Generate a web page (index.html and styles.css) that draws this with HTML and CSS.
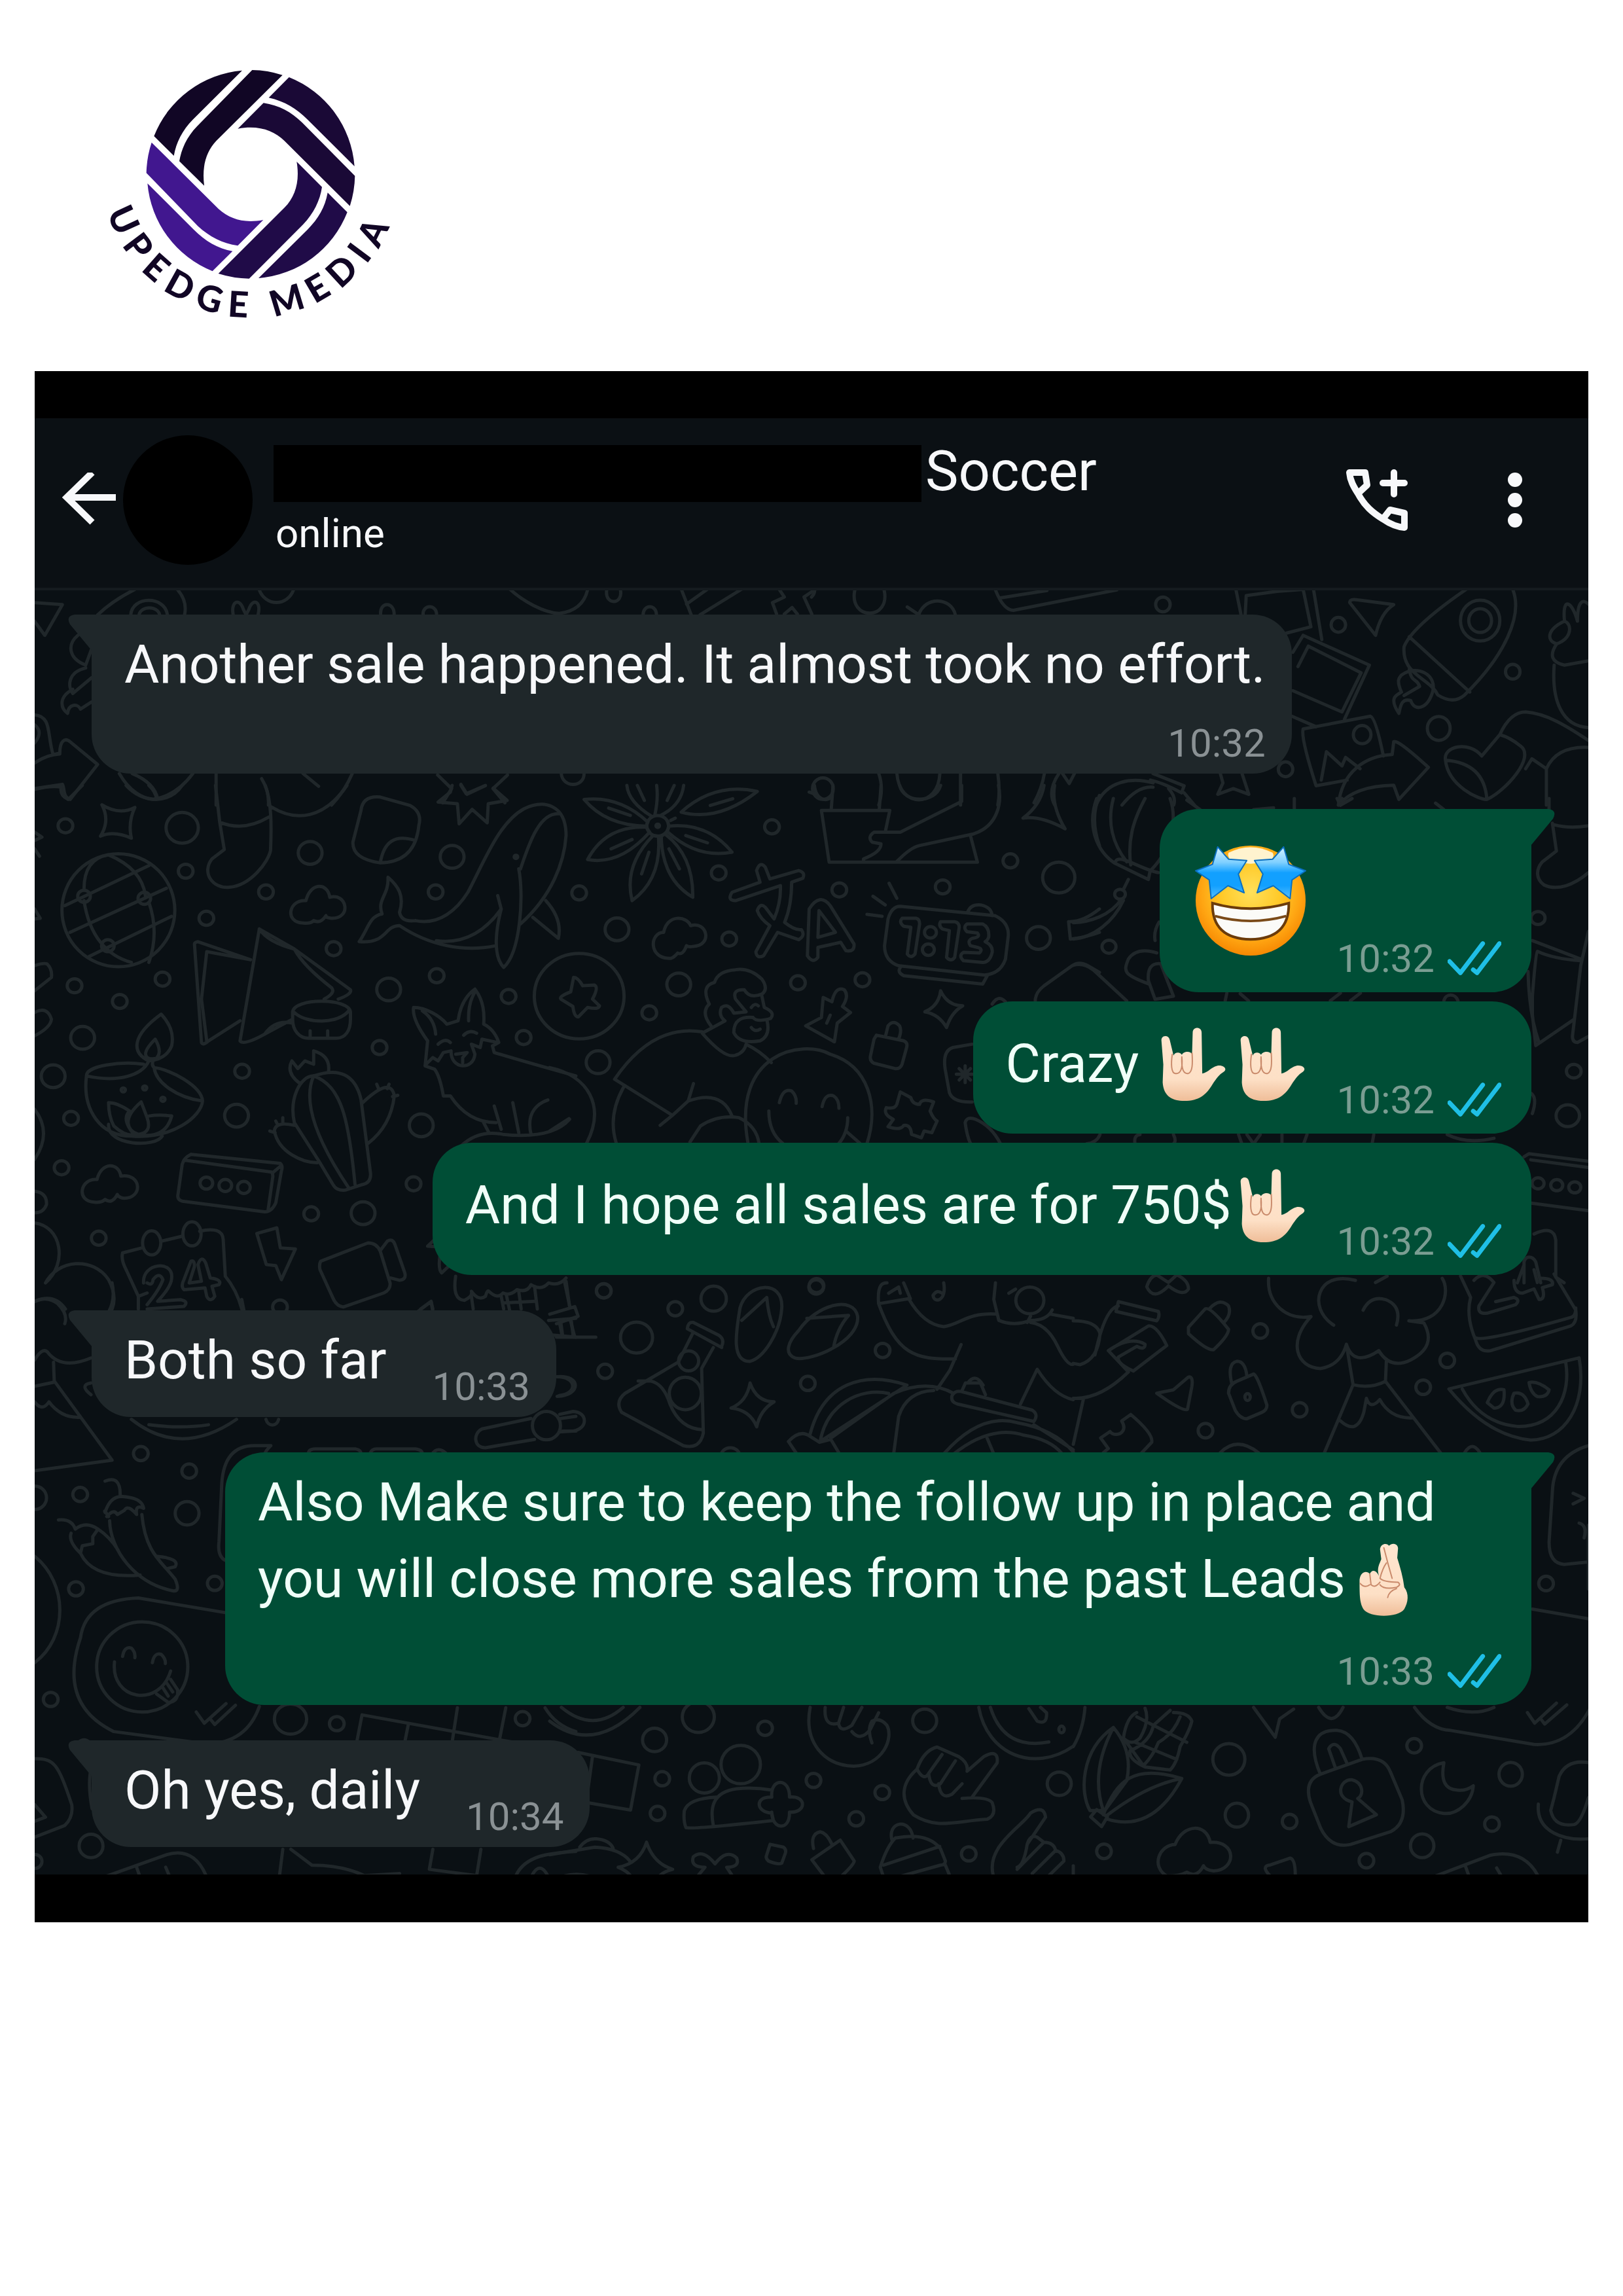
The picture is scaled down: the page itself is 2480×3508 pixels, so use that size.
FILE: index.html
```html
<!DOCTYPE html>
<html lang="en">
<head>
    <meta charset="UTF-8">
    <meta name="viewport" content="width=device-width, initial-scale=1.0">
    <title>Upedge Media</title>
    <link rel="stylesheet" href="styles.css">
</head>
<body>
    <!-- shared symbols -->
    <svg class="defs" aria-hidden="true">
        <defs>
            <linearGradient id="skin" x1="0" y1="0" x2="0" y2="1">
                <stop offset="0" stop-color="#ffe6cf"/>
                <stop offset="0.7" stop-color="#fde0c6"/>
                <stop offset="1" stop-color="#efbd98"/>
            </linearGradient>
            <radialGradient id="face" cx="0.5" cy="0.42" r="0.6">
                <stop offset="0" stop-color="#ffe05a"/>
                <stop offset="0.45" stop-color="#ffc928"/>
                <stop offset="0.75" stop-color="#ffa512"/>
                <stop offset="1" stop-color="#f58400"/>
            </radialGradient>
            <linearGradient id="star" x1="0" y1="0" x2="0" y2="1">
                <stop offset="0" stop-color="#d8f3ff"/>
                <stop offset="0.3" stop-color="#7fd0ff"/>
                <stop offset="0.5" stop-color="#12a0ff"/>
                <stop offset="0.75" stop-color="#12a0ff"/>
                <stop offset="1" stop-color="#58bfff"/>
            </linearGradient>
            <symbol id="ticks" viewBox="0 0 84 56">
                <path d="M3 32L20 50L55 4M40 45L46 50L81 4" fill="none" stroke="#1fbfe6" stroke-width="7" stroke-linejoin="round" stroke-linecap="round"/>
            </symbol>
            <symbol id="hand" viewBox="0 0 124 124">
                <path d="M14 24C14 16 25 15 27 23L33 48C35 42 44 42 46 47C48 41 60 40 62 46L63 12C63 2 77 2 77 12L78 76C88 74 92 66 101 64C110 62 118 68 112 73C104 78 100 84 94 93C84 110 72 119 50 119C26 119 17 107 16 90L17 62Z" fill="url(#skin)"/>
                <path d="M31 46C29 60 29 76 36 76C43 77 48 70 46 50M46 50C45 70 49 77 56 76C63 74 63 60 62 44" fill="none" stroke="#c98a6b" stroke-width="2" stroke-linecap="round"/>
            </symbol>
        </defs>
    </svg>

    <div class="page">
        <svg class="logo" viewBox="0 0 1500 1290" role="img" aria-label="Upedge Media">
            <path fill="#110625" d="M690 83A478 478 0 0 0 286 384L377 474C388 412 415 358 464 308Z"/>
            <path fill="#110625" d="M736 81A478 478 0 0 1 875 104L572 405C525 455 505 520 516 611L402 499C411 445 435 388 484 338Z"/>
            <path fill="#1a0936" d="M905 114A478 478 0 0 1 1205 522L990 308C940 259 885 224 812 208Z"/>
            <path fill="#1a0936" d="M788 232C860 243 915 273 965 322L1207 566A478 478 0 0 1 1184 704L884 406C835 356 760 332 670 350Z"/>
            <path fill="#200b48" d="M940 501L1056 617C1047 680 1017 738 970 788L722 1037A478 478 0 0 1 581 1014L884 712C935 660 955 590 940 501Z"/>
            <path fill="#200b48" d="M1082 643L1172 733A478 478 0 0 1 765 1035L990 812C1040 762 1070 710 1082 643Z"/>
            <path fill="#41178f" d="M275 413L582 718C635 765 700 785 787 768L670 886C600 875 540 845 488 797L251 553A478 478 0 0 1 275 413Z"/>
            <path fill="#41178f" d="M256 601L468 812C520 865 580 900 646 911L554 1003A478 478 0 0 1 256 601Z"/>
            <path id="arc" fill="none" d="M72 735A692 692 0 0 0 1400 700"/>
            <text class="logo-text"><textPath href="#arc">UPEDGE MEDIA</textPath></text>
        </svg>

        <main class="phone">
            <header class="topbar">
                <button class="icon-btn back" aria-label="Back">
                    <svg width="84" height="84" viewBox="0 4 84 84"><path d="M46 4L7 42L46 80M8 42H82" fill="none" stroke="#f7f8fa" stroke-width="10"/></svg>
                </button>
                <div class="avatar"></div>
                <div class="contact">
                    <div class="name-row">
                        <span class="redacted"></span>
                        <h1>Soccer</h1>
                    </div>
                    <p>online</p>
                </div>
                <button class="icon-btn call" aria-label="Add to call">
                    <svg width="94" height="94" viewBox="0 0 94 94" fill="none" stroke="#f7f8fa" stroke-width="10" stroke-linejoin="round">
                        <path d="M5 5H29L32 24L18 37C11 26 6 17 5 5ZM18 37C28 56 40 66 56 76M56 76L67 62L89 67V89C76 88 66 83 56 76Z"/>
                        <path d="M73 5V38M56 21H89" stroke-linecap="round"/>
                    </svg>
                </button>
                <button class="icon-btn more" aria-label="More options">
                    <svg width="24" height="86" viewBox="0 0 24 86" fill="#f7f8fa"><circle cx="12" cy="12" r="11"/><circle cx="12" cy="43" r="11"/><circle cx="12" cy="74" r="11"/></svg>
                </button>
            </header>

            <section class="chat">
                <svg class="doodles" viewBox="53 902 2374 1966" preserveAspectRatio="xMidYMin slice" aria-hidden="true">
                    <!-- top left edge -->
                    <g transform="translate(40 550) scale(.7908 .4337)">
                        <path d="M16 855L70 862L36 970L16 920M138 898Q165 850 210 808M292 808Q312 850 306 898M202 898C205 830 268 830 273 898M218 898C222 865 254 865 258 898M450 808C462 870 505 870 517 808M400 898C395 850 412 835 420 880L425 898L430 880C438 835 455 850 448 898M685 898C682 850 712 850 711 898M767 898C765 860 794 860 793 898M935 808C960 850 1000 890 1030 893C1065 885 1080 850 1085 808M1122 808C1116 865 1155 865 1148 808M1192 898C1192 860 1218 860 1218 898M1266 808L1285 898M1276 860L1316 808M1302 898L1382 808M1455 808L1465 835L1442 855L1450 895M1525 808L1503 835L1518 895M1465 895L1480 872L1490 895"/>
                        <path d="M100 970C80 1000 80 1050 115 1075L126 1020M115 1085C80 1100 80 1150 90 1175L126 1120M90 1160C60 1190 68 1230 80 1245C82 1210 100 1210 105 1230L126 1205M16 1250C50 1255 40 1320 52 1390L65 1385C65 1340 75 1330 85 1345L138 1425L85 1548C70 1540 75 1510 70 1495L16 1510M16 1420Q40 1390 65 1388M16 1285Q34 1310 16 1350M180 1457C200 1520 225 1545 245 1548C275 1540 300 1510 322 1457M205 1457C235 1480 250 1510 254 1546M367 1457V1568M455 1475Q470 1520 468 1568M535 1457L565 1502M630 1457Q615 1520 590 1568M795 1462L822 1510L805 1560M930 1462L902 1510L925 1560M840 1495L852 1530L887 1500M1034 1457C1036 1508 1078 1508 1078 1457"/>
                    </g>
                    <!-- top right: photos, rocket, mitten -->
                    <g transform="translate(1240 550) scale(.7908 .4337)">
                        <path d="M0 835Q8 820 5 808M84 808C70 920 155 920 140 808M185 870L208 898M207 898C220 830 270 835 278 898M355 808Q370 880 390 882L590 810M365 838L455 812M820 808L830 898M838 898L840 830L900 815L950 808L965 940L918 962M970 808L986 985M930 1030L950 970L1078 1075L1030 1265M940 1080L960 1008L1062 1102L1025 1240L930 1165M928 1255L975 1292M950 1300L1080 1255Q1090 1260 1105 1395M950 1300Q945 1330 975 1500L1035 1480M985 1480L995 1380L1025 1430L1032 1400L1060 1440M1018 1568C1025 1450 1070 1395 1122 1390L1125 1345Q1132 1335 1192 1435L1135 1548L1125 1498Q1050 1500 1018 1568M1040 855Q1040 840 1055 845L1125 862Q1100 890 1090 970Z"/>
                        <path d="M1265 808Q1160 940 1145 1010C1140 1110 1195 1120 1210 1180Q1240 1215 1262 1180C1340 1040 1375 900 1355 808M1155 975L1272 1170M1140 1110C1170 1070 1210 1110 1200 1170C1190 1230 1165 1240 1158 1200C1140 1190 1138 1220 1135 1245C1115 1190 1130 1180 1140 1170C1130 1130 1135 1120 1140 1110M1155 1090C1160 1140 1170 1120 1175 1150L1145 1182M1501 860C1490 840 1480 850 1480 920C1470 850 1450 830 1455 920C1420 950 1420 990 1440 1000C1470 980 1470 930 1455 920M1440 1000C1425 1040 1430 1065 1455 1075L1501 1060M1435 1075C1430 1200 1450 1290 1501 1295M1330 1320Q1350 1240 1380 1240C1420 1245 1460 1290 1501 1340M1330 1320L1295 1395C1270 1340 1220 1360 1225 1410C1230 1500 1290 1550 1305 1548C1340 1520 1400 1400 1370 1360Q1350 1330 1330 1320M1225 1410Q1300 1420 1305 1548M1380 1440L1392 1405L1420 1440V1568M1420 1440Q1440 1360 1501 1365"/>
                        <ellipse cx="1292" cy="918" rx="38" ry="72"/><ellipse cx="1292" cy="918" rx="22" ry="42"/>
                        <ellipse cx="679" cy="861" rx="14" ry="26"/><ellipse cx="1018" cy="933" rx="14" ry="26"/><ellipse cx="1355" cy="1098" rx="14" ry="26"/><ellipse cx="1212" cy="1298" rx="22" ry="42"/><ellipse cx="916" cy="1442" rx="14" ry="26"/><ellipse cx="1064" cy="1320" rx="17" ry="32"/>
                        <path d="M130 1457Q140 1510 130 1568M165 1457C170 1580 245 1580 248 1457M288 1457V1568M360 1457Q365 1520 360 1568M450 1457Q445 1510 430 1560M478 1457Q455 1520 470 1568M485 1457L498 1492L508 1457M550 1568C570 1480 620 1470 660 1490M660 1457L720 1500L715 1525Q680 1490 655 1480M790 1457L795 1490L785 1530L815 1510L845 1530L832 1457M600 1568Q630 1500 660 1505M690 1510Q705 1540 700 1568M720 1525L740 1568"/>
                        <ellipse cx="22" cy="1510" rx="20" ry="38"/>
                    </g>
                    <!-- right of the sent messages -->
                    <g transform="translate(1640 1220) scale(.5102 .4719)">
                        <path d="M70 0C40 90 70 170 125 210L225 262L230 235C300 160 310 60 290 0M120 0C100 80 120 150 160 205M215 0C190 50 160 120 172 215M125 210C130 170 200 230 255 240M165 262L150 295M145 325C110 380 50 400 0 402M150 330C120 400 60 450 0 455M795 15L805 0M540 36L600 30M662 0V36M790 0L800 22L835 0M1085 15L1110 36M340 5L380 36M245 650L225 590Q220 530 262 535M245 650L300 640L262 535M0 540Q30 530 60 555L160 655M225 600C150 570 150 560 165 520Q190 480 250 500M245 460Q240 430 257 400"/>
                        <path d="M1425 0V36M1435 80L1447 170L1405 205C1385 230 1385 260 1410 280C1450 300 1500 280 1543 240M1440 85Q1490 100 1560 85M1375 460L1520 520M1543 430L1520 540L1495 770Q1495 790 1510 790L1560 760M1520 525Q1440 520 1390 495Q1385 500 1375 640L1375 700L1385 800L1500 715M1362 560Q1365 700 1395 790M1372 955Q1390 970 1375 1020M1350 1160L1365 1150L1560 1177M1370 1170L1560 1197M1372 1310L1560 1337M1380 1410Q1440 1380 1445 1430V1550L1470 1568M1350 1568V1500C1355 1480 1375 1480 1385 1500L1400 1568M1330 1568L1350 1510"/>
                        <circle cx="107" cy="480" r="21"/><circle cx="140" cy="310" r="16"/><circle cx="1392" cy="387" r="21"/><circle cx="1499" cy="883" r="22"/><circle cx="1481" cy="1027" r="35"/><circle cx="1392" cy="1246" r="18"/><circle cx="1448" cy="1252" r="18"/><circle cx="1502" cy="1259" r="18"/>
                        <path d="M460 630L455 655M770 655L800 630M830 655L860 630M500 632L525 655M1110 655C1115 630 1145 630 1152 655M80 1088Q70 1115 40 1118M185 1118Q180 1090 200 1088M300 1088Q310 1110 300 1118M495 1088L505 1118M560 1088L540 1118L520 1088M625 1088V1118M700 1088L690 1118M900 1088L895 1118M1120 1088Q1180 1120 1260 1100"/>
                    </g>
                    <!-- left: globe, paper, lamp, cactus, fox, whale, calendar -->
                    <g transform="translate(40 1200) scale(.5357 .5102)">
                        <path d="M24 12Q70 0 100 5Q95 30 120 42L160 0M285 0Q320 40 370 42Q420 40 445 0M350 0Q370 20 372 42M216 58Q265 90 310 66Q290 110 300 158Q250 135 212 152Q240 105 216 58ZM540 0L552 110L565 192L530 220C500 260 530 310 580 305C640 300 690 230 697 195C700 120 700 50 682 0M552 110Q620 140 692 95M700 65C770 110 850 100 915 0M24 140L45 155L24 165M24 190L38 212M24 370L40 398L24 400"/>
                        <path d="M955 75Q960 30 1010 35L1095 60Q1130 80 1120 120Q1110 230 1010 232Q930 220 932 170ZM1010 232C1020 170 1050 145 1110 165M1215 0L1210 20L1175 50L1230 55L1235 115L1272 72L1315 112L1318 55L1372 45L1332 8M1240 0L1255 25L1310 0M1110 405C1180 420 1230 370 1260 320C1310 220 1350 110 1420 70C1480 40 1540 60 1540 150C1535 230 1500 330 1410 415M1410 250C1430 190 1460 80 1520 85M1405 250C1420 330 1410 500 1362 545C1330 510 1340 430 1355 370L1345 330M1110 405Q1070 410 1065 380C1080 330 1060 300 1032 275C1035 330 1000 340 1015 385C980 390 975 430 950 468C1030 475 1020 420 1065 420C1150 480 1250 500 1340 480M1170 465Q1280 480 1355 370M1482 345Q1530 400 1518 458L1445 395"/>
                        <circle cx="1397" cy="214" r="5"/>
                        <ellipse cx="263" cy="374" rx="161" ry="169"/><path d="M110 360L350 240M125 440L400 308M180 512L415 392M165 310Q165 220 235 208Q330 250 340 330M165 345C180 450 230 510 300 530M350 350Q380 440 350 530"/><circle cx="165" cy="332" r="18"/><circle cx="337" cy="338" r="18"/><circle cx="233" cy="480" r="18"/>
                        <path d="M790 412C735 410 750 340 798 345C810 290 860 290 866 335C915 320 930 400 870 398Q850 395 855 390Q840 415 820 405Q810 415 790 412ZM665 430L610 765Q620 780 680 745L760 700M665 430L765 490L925 612Q930 625 890 640M665 430Q690 470 765 490Q790 540 870 605Q885 620 850 640M480 475L500 770Q505 780 520 765L610 705M640 522L490 468Q480 470 480 475M640 522L515 498L500 640L515 765M680 745Q710 700 760 712M760 680C760 635 925 635 925 680V700C925 735 910 757 885 757H805C780 757 760 735 760 700ZM765 680C800 715 890 715 920 675M810 735V755M860 735V755"/>
                        <path d="M385 685C300 750 300 800 350 825Q400 820 415 780Q425 730 385 685ZM368 760C320 810 345 822 370 818Q390 800 368 760ZM335 835C270 825 170 840 172 870C160 970 210 1050 300 1050C420 1060 500 990 503 945C500 900 410 850 365 845Q355 835 365 820M172 870C260 890 330 870 350 825M365 845C370 890 430 935 503 945M235 950Q235 990 250 1020Q280 1050 310 1048Q270 1000 295 975Q260 950 235 950ZM328 948C270 1000 290 1035 320 1045Q360 1040 345 995ZM350 990Q380 985 415 990Q400 1050 340 1048M235 1015C230 1080 370 1085 388 1050"/>
                        <circle cx="277" cy="912" r="6"/><circle cx="338" cy="906" r="6"/><circle cx="390" cy="940" r="6"/>
                        <path d="M780 892Q740 860 758 825L775 848L795 825L820 835V795Q870 810 862 860M765 1010C750 940 780 870 820 870Q930 830 955 940L982 1160Q985 1190 960 1195L910 1212Q885 1215 875 1195L835 1125ZM820 870C790 940 820 1050 920 1205M820 870C900 900 920 1000 938 1195M765 1018Q710 1005 708 1035C720 1100 790 1130 830 1130M960 950Q1040 870 1050 930Q1040 1020 975 1072M695 1035L710 1040M712 1005L718 1018M732 995V1008M1000 895L1005 908M1035 895L1030 908M1060 928L1045 932M470 1105L725 1132Q733 1140 728 1155L712 1250Q700 1278 680 1277L445 1245Q430 1240 433 1225L445 1135Q450 1115 470 1105M450 1122L700 1158Q705 1165 703 1175L690 1272M705 1158L728 1138"/>
                        <circle cx="514" cy="1191" r="18"/><circle cx="568" cy="1198" r="18"/><circle cx="621" cy="1204" r="18"/>
                        <path d="M195 1248C140 1245 155 1175 202 1180C215 1125 265 1130 270 1170C330 1160 335 1240 275 1236Q262 1232 260 1225Q245 1255 225 1240Q215 1250 195 1248ZM1145 765Q1100 700 1105 665C1140 665 1180 690 1200 715L1232 705Q1240 640 1280 610Q1310 650 1305 715Q1335 730 1348 770L1330 780L1335 800Q1430 830 1568 870M1145 765L1138 840L1165 850Q1180 870 1190 930L1210 930Q1260 1010 1340 1010M1130 675Q1165 700 1168 745M1262 705Q1260 650 1282 615M1175 775Q1195 755 1210 770M1248 748Q1265 730 1285 742M1138 838L1160 815L1175 825L1190 800L1212 795C1210 850 1275 855 1280 805L1270 775L1295 785L1300 760L1345 770M1225 805L1258 800L1245 815V830M1335 960L1355 1030M1388 950L1405 1040M1488 942C1440 960 1430 1000 1440 1045M1240 1080Q1290 1030 1360 1045Q1500 1060 1550 1000M1305 1010L1320 1040"/>
                        <path d="M60 535Q75 550 72 575L24 615M24 540Q50 530 60 535M24 680Q60 660 72 700Q70 725 24 750M24 970Q75 1040 24 1120M24 1215Q60 1220 58 1255Q50 1280 24 1280M24 1310C100 1320 120 1430 55 1490C90 1420 190 1410 235 1480Q260 1530 245 1568M24 1545Q80 1520 112 1568M275 1400L330 1385M385 1365L445 1350M495 1335Q560 1320 562 1360L568 1470Q600 1510 615 1568M275 1400Q270 1420 285 1450L320 1530V1568M320 1530L345 1520M658 1342L715 1325L725 1385L768 1388L728 1480L712 1438L685 1435ZM840 1425L975 1370Q1000 1370 1010 1395L1038 1490Q1040 1510 1020 1520L905 1562Q885 1560 875 1535L838 1450Q835 1435 840 1425ZM1012 1390L1030 1365Q1045 1355 1052 1375L1080 1460Q1085 1480 1065 1482L1040 1475"/>
                        <path d="M335 1490C330 1430 420 1420 415 1475Q415 1500 375 1545L440 1540Q465 1545 450 1560L345 1568M345 1490Q360 1500 362 1480Q380 1455 390 1480Q380 1510 345 1555M470 1425Q480 1420 480 1440L465 1490L500 1485L490 1435Q500 1405 512 1430L525 1475Q560 1480 550 1495L530 1500L538 1530Q525 1550 515 1530L510 1505L450 1510Q440 1500 450 1480Z"/>
                        <ellipse cx="358" cy="1370" rx="26" ry="36"/><ellipse cx="473" cy="1343" rx="26" ry="36"/>
                        <g>
                            <circle cx="112" cy="121" r="21"/><circle cx="455" cy="257" r="21"/><circle cx="684" cy="319" r="21"/><circle cx="514" cy="398" r="21"/><circle cx="877" cy="489" r="21"/><circle cx="389" cy="580" r="21"/><circle cx="138" cy="600" r="21"/><circle cx="267" cy="647" r="21"/><circle cx="616" cy="856" r="21"/><circle cx="1008" cy="785" r="21"/><circle cx="1168" cy="319" r="21"/><circle cx="1171" cy="570" r="21"/><circle cx="1376" cy="632" r="21"/><circle cx="1419" cy="755" r="21"/><circle cx="128" cy="997" r="21"/><circle cx="101" cy="1145" r="21"/><circle cx="207" cy="1356" r="21"/><circle cx="813" cy="1283" r="21"/><circle cx="1105" cy="1193" r="21"/>
                            <circle cx="810" cy="202" r="34"/><circle cx="1215" cy="214" r="34"/><circle cx="1034" cy="611" r="34"/><circle cx="161" cy="756" r="34"/><circle cx="77" cy="871" r="34"/><circle cx="600" cy="989" r="34"/><circle cx="1127" cy="1018" r="34"/><circle cx="961" cy="1281" r="34"/><circle cx="445" cy="127" r="46"/>
                        </g>
                        <path d="M1145 1380L1175 1350V1382ZM1180 1410Q1175 1450 1185 1460L1205 1440M1225 1470Q1215 1540 1250 1542Q1275 1530 1270 1515Q1290 1545 1310 1530Q1315 1510 1320 1515Q1345 1540 1360 1520Q1380 1530 1400 1510Q1430 1520 1440 1495Q1470 1515 1490 1490Q1520 1500 1540 1475M1270 1530L1275 1568M1355 1530L1362 1568M1405 1515L1412 1568M1450 1500L1458 1568M1540 1485L1550 1560M1360 1550L1450 1545M1125 1568L1155 1545L1160 1568"/>
                    </g>
                    <!-- middle: flower, clock, runner, smiley -->
                    <g transform="translate(840 1200) scale(.5357 .5102)">
                        <path d="M290 92Q225 50 220 0M300 88Q310 40 305 0M316 90Q375 60 382 0M250 0L270 45M355 0L335 45M280 110Q200 30 98 42Q160 120 275 122ZM275 125Q160 120 108 222Q200 240 285 140ZM295 150Q210 240 235 345Q320 280 310 152ZM318 152Q320 280 408 335Q410 210 328 145ZM335 138Q420 220 520 200Q450 110 340 122ZM375 80Q480 110 592 18Q470 -10 375 80ZM168 68L230 90M175 190L235 162M262 265L283 200M340 190L370 250M388 150L450 172M458 60L522 40M345 105L358 98"/>
                        <circle cx="308" cy="121" r="31"/><circle cx="308" cy="121" r="5"/>
                        <path d="M740 20L755 25M755 0C760 50 800 50 803 30M808 0L803 72M945 0L940 72M775 75H970L958 135M775 75L797 230H1220L1200 150M1175 0V48L1000 140H925Q905 155 920 170L945 175Q945 200 895 220V230M990 228Q1030 185 1055 180L1210 145C1280 120 1290 50 1280 0M998 0C1010 55 1100 55 1115 0M1410 0Q1400 60 1350 98Q1400 90 1470 130Q1430 60 1440 0M1568 30Q1540 100 1568 180M1568 370Q1520 410 1480 408L1485 460Q1530 455 1568 440"/>
                        <path d="M520 320L600 290L590 255Q600 225 615 245L628 280L710 255Q730 260 722 278L690 290Q690 360 670 410Q700 435 718 432Q730 450 710 462L650 440L610 510Q590 520 588 498L628 420Q600 400 592 375Q600 350 615 365L640 400Q660 350 658 300L530 345Q505 345 520 320ZM735 510L740 370Q770 320 800 360L868 475Q870 500 845 495L830 470L765 485V515Q750 535 735 510ZM768 375L765 455L815 440ZM905 386L948 392M922 332L957 358M968 293L990 338"/>
                        <path d="M1000 362L1270 390Q1310 410 1308 450L1300 520Q1285 565 1240 568L995 540Q955 525 955 480L965 400Q975 362 1000 362ZM1192 380Q1200 355 1230 358Q1260 365 1262 390M1000 545Q990 560 1010 570L1235 595L1248 570M1005 398H1045Q1055 400 1055 415L1042 505Q1030 520 1020 505L1030 425L1010 422Q995 410 1005 398ZM1115 408H1155Q1168 410 1168 425L1155 515Q1145 530 1132 515L1140 435L1120 430Q1108 420 1115 408ZM1190 415H1235Q1255 425 1252 455Q1248 465 1242 468Q1265 480 1262 500Q1255 530 1235 530L1180 525Q1165 510 1180 500L1225 502Q1238 490 1220 485L1200 480Q1190 465 1205 458Q1230 455 1220 442L1190 438Q1178 425 1190 415Z"/>
                        <circle cx="1086" cy="440" r="17"/><circle cx="1080" cy="492" r="17"/>
                        <path d="M345 518C280 520 285 440 325 440C335 385 390 390 402 420C450 405 465 480 410 482Q395 485 390 480Q380 510 365 502Q355 515 345 518ZM68 575Q80 575 94 600L128 598Q140 605 122 640L142 660Q140 672 108 665L82 693Q70 695 66 662L32 640Q25 632 60 618Z"/>
                        <circle cx="84" cy="631" r="128"/>
                        <path d="M460 720Q430 680 455 655Q430 600 470 590Q480 555 530 552Q570 545 605 580Q625 610 605 625Q570 640 555 612Q520 610 530 640L560 678L525 682Q510 650 490 665Q480 690 500 705L435 742Q500 820 530 808Q555 800 560 775M605 630L612 665Q645 680 630 698Q590 710 580 695Q525 690 525 740Q540 775 600 765Q630 750 620 705M575 725Q585 740 600 730M575 665Q585 650 595 660M435 738C330 720 250 780 185 880L350 988L395 945L410 893M350 988L315 1018M210 905Q165 990 190 1072M395 945Q490 910 520 990M400 1068L430 1020Q480 985 540 995Q590 1020 597 1072M560 775Q600 795 632 830M0 845C110 870 160 960 105 1072M0 1035L55 998"/>
                        <path d="M565 1068C520 800 720 760 800 805C910 840 940 960 905 1072M655 950Q665 905 690 915Q705 930 703 952M777 962Q785 920 810 930Q825 940 825 967M625 975Q625 1040 665 1072M850 995Q850 1040 825 1072M845 1035L885 1072"/>
                        <path d="M780 635L805 648Q815 600 840 612Q855 630 835 662L858 680L820 712L812 768L730 720L775 695ZM800 688L790 712M932 748L1010 765Q1022 770 1018 785L1005 835Q1000 850 985 848L925 832Q912 825 915 810L925 760ZM958 750L965 720Q980 700 998 720Q1005 735 995 760M1115 615Q1135 660 1178 660Q1145 680 1132 725Q1110 685 1070 678Q1110 660 1115 615ZM1000 918L1030 935Q1035 955 1055 955Q1060 935 1095 948L1085 975Q1095 1000 1105 1005L1090 1040L1068 1035L1060 1055L1032 1045Q1030 1015 1010 1018Q1000 1035 965 1022L980 1000Q950 985 960 965Q985 970 990 955ZM1205 775L1150 785Q1120 795 1128 850L1140 920Q1150 950 1205 948M1185 840V890M1160 865H1205M1168 848L1200 882M1200 848L1168 882M1185 1010Q1190 990 1215 1000Q1260 1020 1285 1072M1185 1010Q1190 1050 1200 1072M1385 645Q1385 620 1410 600L1490 540Q1510 525 1535 540L1568 560M1262 655Q1280 625 1300 648"/>
                        <g>
                            <circle cx="84" cy="322" r="21"/><circle cx="482" cy="262" r="21"/><circle cx="634" cy="124" r="21"/><circle cx="826" cy="313" r="21"/><circle cx="512" cy="460" r="21"/><circle cx="284" cy="681" r="21"/><circle cx="708" cy="591" r="21"/><circle cx="892" cy="582" r="21"/><circle cx="1121" cy="304" r="21"/><circle cx="1314" cy="226" r="21"/><circle cx="154" cy="1514" r="21"/><circle cx="761" cy="1498" r="21"/>
                            <circle cx="192" cy="431" r="34"/><circle cx="368" cy="596" r="34"/><circle cx="138" cy="829" r="34"/><circle cx="1394" cy="457" r="34"/><circle cx="1452" cy="276" r="46"/>
                        </g>
                    </g>
                    <!-- left, below: peppers, sticker -->
                    <g transform="translate(40 1960) scale(.5357 .6378)">
                        <path d="M245 0Q255 40 235 70M615 40L622 70M24 45Q60 30 90 50Q120 75 110 98M24 185Q45 155 60 165Q100 210 185 180M78 190L80 235L245 425L24 450M24 248L80 238M24 285Q45 310 65 285Q100 325 155 322M185 240Q150 245 185 268M1115 70L1155 45L1160 70M1370 30L1380 70M1490 90L1568 85M1500 125L1568 130M1525 95L1530 125M1555 92L1560 125M1515 225C1570 225 1575 265 1520 270M1440 325L1300 350C1275 360 1275 395 1310 395L1450 375M1525 325L1568 320M1530 355L1568 355M300 327Q440 420 600 327M350 340Q440 350 520 340M684 327C690 345 715 345 720 327"/>
                        <ellipse cx="1484" cy="342" rx="40" ry="34"/>
                        <path d="M225 475Q270 460 268 510M235 560Q220 540 225 550Q240 510 275 512Q330 515 335 540Q310 530 315 555Q290 530 280 545L260 555Q250 540 230 560M238 570C240 640 310 720 420 738Q440 740 425 710C390 670 340 650 330 555M92 568Q130 565 140 590M140 590Q170 570 205 590L190 608L190 625L160 630L155 648Q120 620 128 600M155 648Q190 710 325 700M205 590Q240 610 262 640M370 655Q440 660 425 680L400 685M568 665Q545 655 550 620L558 480Q565 390 650 390H698Q685 400 680 410M805 410Q805 398 825 398H940Q955 400 955 410M980 410Q985 398 1000 398H1110Q1130 400 1130 410M1158 410Q1175 390 1200 410M24 655C120 720 120 850 24 910"/>
                        <path d="M568 790L320 755Q170 760 155 850Q90 1010 250 1075L520 1105Q630 1100 665 1015M275 895Q280 870 300 875Q312 885 310 898M360 910Q365 885 385 890Q398 900 397 912M252 908C240 1000 380 1020 412 930M372 985L405 1005Q435 1005 432 975L412 950M390 970L405 990M402 960L418 980M485 1028L508 1055L570 1008M528 1048L538 1058L597 1012M958 1035L1385 1100M958 1035L943 1100M1090 1058L1080 1100M1230 1018L1215 1100M1368 1018L1350 1095M1480 1018Q1510 1060 1568 1075M24 1140C80 1140 90 1150 130 1250Q135 1280 110 1300L24 1328M24 1250L55 1280L24 1290M150 1100Q165 1090 180 1100M185 1165Q175 1200 188 1260M220 1424L400 1370Q480 1350 515 1424M315 1400L325 1424M398 1400L410 1424M732 1357L722 1424M755 1357L815 1395Q900 1395 965 1420L1065 1415M1160 1357L1150 1405L1285 1420L1297 1357M1395 1424C1420 1370 1500 1365 1568 1362M1440 1424Q1465 1380 1490 1424"/>
                        <ellipse cx="331" cy="920" rx="130" ry="108"/>
                        <g>
                            <ellipse cx="724" cy="58" rx="21" ry="17"/><ellipse cx="327" cy="409" rx="21" ry="17"/><ellipse cx="465" cy="451" rx="21" ry="17"/><ellipse cx="154" cy="507" rx="21" ry="17"/><ellipse cx="142" cy="733" rx="21" ry="17"/><ellipse cx="538" cy="720" rx="21" ry="17"/><ellipse cx="70" cy="998" rx="21" ry="17"/><ellipse cx="886" cy="1056" rx="21" ry="17"/><ellipse cx="1416" cy="1044" rx="21" ry="17"/><ellipse cx="24" cy="1386" rx="21" ry="17"/><ellipse cx="459" cy="552" rx="34" ry="28"/><ellipse cx="24" cy="515" rx="34" ry="28"/><ellipse cx="185" cy="1349" rx="34" ry="28"/><ellipse cx="754" cy="1045" rx="46" ry="36"/>
                        </g>
                    </g>
                    <!-- middle, below: flask, flip-flops, backpack, people, hands -->
                    <g transform="translate(840 1960) scale(.5102 .6378)">
                        <path d="M0 75L75 57L85 80L20 98M45 0L60 57M30 98L38 130M62 90L75 130M20 130H138M22 225C95 220 95 270 22 272M30 315L70 308C115 310 115 350 70 355L30 357M425 95Q415 95 412 110L515 155M430 95L505 125Q525 135 515 152M430 118L385 190L225 265Q195 285 215 310L400 390Q450 400 460 360L455 205L490 155M265 235H300Q340 240 360 290Q390 350 460 352"/>
                        <ellipse cx="416" cy="187" rx="30" ry="24"/><ellipse cx="406" cy="265" rx="48" ry="39"/>
                        <path d="M600 240Q620 285 672 285Q630 305 620 345Q600 305 543 300Q590 285 600 240ZM570 60C590 0 700 -10 695 60C690 120 640 180 600 188C540 190 560 110 570 60ZM575 90L650 35Q655 80 670 105M745 115C800 50 910 30 922 80C930 140 780 190 735 180C700 170 715 140 745 115ZM770 85L895 78Q860 110 850 155"/>
                        <path d="M985 50C980 0 1000 0 1010 0M985 50L1075 38Q1120 100 1180 105C1230 100 1250 70 1340 75M1060 0L1080 38M1015 25L1045 10L1050 25M985 50C1040 170 1090 185 1215 182M1232 148L1198 210L1160 255M1180 0C1190 45 1150 50 1148 30Q1160 15 1175 25M1335 0L1330 40L1345 90Q1390 105 1440 90Q1490 90 1505 65M1375 25L1395 15M1440 80L1430 95M1500 75L1568 85M1440 95Q1490 100 1520 150T1568 195M1410 290L1460 207Q1510 270 1568 280M715 380Q750 350 780 368L808 382L842 375L868 410M715 380L740 410M780 362C820 240 940 210 1070 245L810 380C830 290 930 250 1015 265M842 372L1030 265Q1130 230 1210 265M1030 410L1045 320Q1070 260 1150 258M1205 270Q1215 255 1240 262L1445 305Q1465 315 1450 332L1220 290Q1200 285 1205 270ZM1235 258L1245 240H1290L1305 268M1252 240Q1275 215 1298 245M1180 410Q1290 310 1400 335Q1510 350 1568 405M1210 410Q1320 340 1420 365Q1500 375 1535 410M1310 372L1330 410M1450 340L1568 400"/>
                        <ellipse cx="1438" cy="42" rx="42" ry="32"/>
                        <path d="M0 1050Q130 1130 270 1017M35 1017Q130 1080 220 1017M85 1125L267 1155L242 1263L110 1245M128 1135L110 1240M408 1305Q400 1290 403 1265Q415 1235 500 1232M408 1305Q420 1310 670 1288M490 1300C480 1260 485 1220 560 1212Q610 1208 665 1215M670 1288L665 1270C620 1270 610 1230 665 1232C660 1185 720 1185 718 1232C770 1228 770 1270 718 1268C720 1315 665 1310 665 1268"/>
                        <ellipse cx="463" cy="1186" rx="45" ry="36"/><ellipse cx="572" cy="1154" rx="59" ry="46"/>
                        <path d="M780 1017C760 1100 820 1155 910 1158C1000 1155 1030 1090 1010 1060Q990 1040 965 1050Q950 1070 965 1102M825 1017Q820 1065 865 1055L880 1017M865 1055Q870 1080 905 1060L935 1017M905 1075Q930 1100 960 1070L985 1030M1100 1165C1050 1200 1050 1240 1090 1275C1160 1310 1210 1290 1310 1285Q1340 1275 1325 1245Q1310 1230 1235 1235M1100 1165Q1120 1120 1160 1112L1225 1135M1100 1165Q1120 1195 1135 1175L1175 1130M1135 1175Q1140 1215 1170 1200L1215 1145M1165 1200Q1170 1240 1205 1225L1235 1200M1225 1135Q1255 1150 1250 1170L1300 1135Q1345 1115 1340 1150L1265 1232M1285 1017C1310 1130 1450 1175 1568 1110M1320 1017Q1360 1120 1495 1100M1435 1020L1460 1050Q1490 1060 1488 1030L1470 1017"/>
                        <circle cx="1533" cy="1070" r="8"/>
                        <path d="M0 1370L135 1352Q210 1355 240 1385M90 1352Q110 1330 140 1332Q180 1335 190 1355M30 1424Q80 1410 130 1424M205 1400Q270 1390 290 1340Q310 1390 368 1405Q340 1410 325 1424M205 1400Q235 1410 245 1424M440 1424L465 1400Q420 1400 430 1375Q460 1355 495 1392Q530 1355 560 1378Q570 1400 530 1400L550 1424M660 1345L700 1352Q710 1358 705 1368L695 1390Q685 1395 655 1385Q645 1378 650 1370ZM825 1424L785 1382L870 1335L912 1385Q910 1395 870 1424M790 1355Q780 1320 810 1315Q830 1318 845 1345M1000 1424L990 1400Q1010 1350 1035 1330M1025 1335C1010 1290 1080 1280 1088 1330M1035 1330Q1130 1315 1170 1355L1185 1385Q1185 1395 1170 1395L1040 1424M1000 1395L1168 1350M1185 1395L1200 1424M1330 1424C1300 1350 1420 1300 1440 1270Q1480 1250 1485 1280L1430 1345Q1420 1395 1400 1400M1430 1345Q1440 1320 1460 1328L1480 1340L1400 1405M1480 1340Q1510 1340 1515 1360L1445 1415M1515 1360Q1540 1365 1540 1385L1490 1424"/>
                        <g>
                            <ellipse cx="162" cy="19" rx="22" ry="17"/><ellipse cx="376" cy="62" rx="22" ry="17"/><ellipse cx="798" cy="10" rx="22" ry="17"/><ellipse cx="166" cy="212" rx="22" ry="17"/><ellipse cx="773" cy="241" rx="22" ry="17"/><ellipse cx="997" cy="162" rx="22" ry="17"/><ellipse cx="645" cy="1067" rx="22" ry="17"/><ellipse cx="337" cy="1188" rx="22" ry="17"/><ellipse cx="323" cy="1271" rx="22" ry="17"/><ellipse cx="790" cy="1192" rx="22" ry="17"/><ellipse cx="996" cy="1221" rx="22" ry="17"/><ellipse cx="918" cy="1284" rx="22" ry="17"/><ellipse cx="1255" cy="1368" rx="22" ry="17"/><ellipse cx="491" cy="38" rx="38" ry="30"/><ellipse cx="260" cy="131" rx="48" ry="37"/><ellipse cx="314" cy="1095" rx="36" ry="28"/><ellipse cx="445" cy="1040" rx="48" ry="37"/><ellipse cx="1123" cy="1049" rx="36" ry="28"/><ellipse cx="1526" cy="1200" rx="36" ry="28"/><ellipse cx="541" cy="415" rx="28" ry="20"/>
                        </g>
                    </g>
                    <!-- right, below: volcano, melon, padlock, corn -->
                    <g transform="translate(1640 1940) scale(.5102 .6505)">
                        <path d="M220 40Q230 15 250 12L285 30L310 12Q345 25 345 45Q330 65 285 38Q240 75 220 40ZM0 120Q70 120 80 150Q75 210 20 223L0 220M65 200Q95 90 135 85M135 75L255 98Q260 110 250 120L128 98ZM105 190L225 132Q250 130 280 178L180 238Q130 220 135 205L190 180Q215 190 215 175Q170 155 105 190L165 240M0 302Q80 305 165 240M30 305L0 410M345 135L395 92Q410 85 465 140Q465 155 420 188Q400 190 345 150ZM410 90Q440 65 465 85Q475 105 450 125M250 290L300 282L345 252Q360 250 355 275L342 328Q330 335 250 290ZM465 290Q465 270 490 262L540 245Q550 245 580 318Q580 330 565 335L520 350Q500 350 485 330ZM475 268Q460 220 490 215Q515 215 520 250M90 430L105 420L82 395L110 380Q120 390 140 385Q160 375 145 355L172 340Q240 385 235 405L205 430M440 430Q490 390 555 430"/>
                        <circle cx="522" cy="299" r="8"/>
                        <path d="M585 20C580 80 640 120 712 110C640 170 670 230 740 232Q800 225 818 175Q840 230 915 190Q950 235 1010 212Q1090 180 1050 125L1005 120C1110 125 1130 50 1105 20M780 130C700 90 730 0 845 25M905 30L940 15M868 95Q890 60 935 70Q985 85 968 130M820 185L838 270Q890 280 935 262L938 210M838 270L752 430M935 262L1100 430M800 355Q850 390 870 335L878 302Q890 330 918 305Q950 350 1015 348M1125 280L1515 207C1540 320 1470 400 1370 400Q1240 390 1125 280ZM1165 280Q1220 360 1330 368C1450 370 1490 290 1475 218M1240 312Q1260 275 1290 282Q1295 325 1260 325ZM1320 290Q1350 285 1362 315Q1350 335 1325 330Q1305 315 1320 290ZM1365 265Q1390 260 1425 282Q1420 300 1390 298Q1370 290 1365 265ZM1160 15L1190 65Q1175 110 1205 165Q1215 195 1250 190L1490 132Q1510 125 1505 95L1440 10M1205 160Q1230 170 1490 112Q1505 110 1505 90M1200 25Q1230 0 1260 30L1215 85Q1210 105 1240 102L1325 82Q1340 70 1320 65L1265 75M1320 25Q1320 55 1345 55L1380 45L1395 70Q1415 70 1405 42L1435 35Q1440 20 1400 20M1380 0L1390 30"/>
                        <path d="M1172 430Q1195 400 1218 430M1560 410Q1440 430 1435 520L1425 640Q1425 690 1470 692L1560 685M1497 525L1530 537L1497 550M1515 595Q1540 600 1530 630M1543 600V750M1375 797L1560 822M1022 1028Q1070 1080 1130 1082L1380 1115Q1500 1120 1560 1010M1120 1028Q1200 1050 1260 1028M1360 1040L1382 1065L1447 1018M1403 1058L1412 1067L1478 1022M0 1120Q30 1080 35 1028M540 1028L605 1098L618 1055L660 1032M735 1028Q775 1080 808 1028"/>
                        <path d="M740 1185C700 1110 730 1080 790 1082Q840 1085 865 1150M785 1170L765 1125Q780 1105 800 1125L820 1160M740 1185L865 1150Q930 1140 950 1180L985 1245Q1000 1300 950 1320L830 1350Q770 1360 740 1310L710 1250Q690 1200 740 1185ZM835 1250C780 1240 800 1195 835 1198C870 1205 870 1235 852 1242L908 1280L825 1308ZM1110 1158Q1095 1220 1150 1222Q1175 1225 1198 1212C1195 1250 1150 1280 1110 1277C1020 1270 1020 1170 1110 1158ZM1440 1240L1455 1190Q1480 1145 1560 1160M1430 1270Q1440 1310 1500 1303Q1520 1300 1543 1240M1430 1270L1440 1240M1393 1255C1385 1320 1470 1345 1560 1335M1460 1340L1450 1368M120 1075C20 1130 20 1230 50 1270L90 1270Q50 1180 120 1075ZM120 1075Q180 1130 160 1200L90 1275M90 1280C130 1200 180 1160 325 1195C260 1290 180 1310 100 1290M325 1195Q220 1210 100 1282M52 1285L70 1268L102 1285L85 1308ZM150 1100Q160 1050 190 1040M150 1100Q175 1120 200 1100Q230 1060 215 1030M170 1130Q165 1150 215 1168L290 1175Q310 1160 320 1120Q350 1080 355 1060Q345 1040 300 1040M170 1130Q230 1110 240 1070L290 1035M210 1165Q240 1140 255 1110Q300 1090 320 1050M190 1050L340 1110M185 1110L310 1150M150 1100L210 1165"/>
                        <path d="M280 1424C230 1400 260 1350 305 1350C330 1300 400 1300 410 1345C490 1340 490 1410 420 1412Q395 1410 390 1400Q370 1430 340 1415Q320 1424 280 1424ZM590 1424Q560 1400 590 1398L650 1382Q665 1385 665 1424M1085 1424L1250 1375Q1350 1360 1392 1424M1175 1402L1185 1424M1268 1405L1282 1424M0 1400V1424"/>
                        <g>
                            <ellipse cx="560" cy="144" rx="22" ry="17"/><ellipse cx="678" cy="329" rx="22" ry="17"/><ellipse cx="396" cy="378" rx="22" ry="17"/><ellipse cx="1120" cy="213" rx="22" ry="17"/><ellipse cx="1048" cy="276" rx="22" ry="17"/><ellipse cx="1416" cy="737" rx="22" ry="17"/><ellipse cx="1021" cy="1118" rx="22" ry="17"/><ellipse cx="648" cy="1296" rx="22" ry="17"/><ellipse cx="1254" cy="1302" rx="22" ry="17"/><ellipse cx="878" cy="1388" rx="22" ry="17"/><ellipse cx="92" cy="1366" rx="22" ry="17"/><ellipse cx="490" cy="1281" rx="35" ry="28"/><ellipse cx="1310" cy="1185" rx="35" ry="28"/><ellipse cx="1045" cy="1353" rx="35" ry="28"/><ellipse cx="466" cy="1150" rx="48" ry="37"/>
                        </g>
                    </g>
                </svg>

                <article class="bubble received tail stacked">
                    <p class="text">Another sale happened. It almost took no effort.</p>
                    <div class="meta"><time>10:32</time></div>
                </article>

                <article class="bubble sent tail">
                    <svg class="star-face" viewBox="0 0 172 172" role="img" aria-label="Star-struck face">
                        <circle cx="86" cy="87" r="85" fill="url(#face)"/>
                        <path d="M52 13Q86 -4 120 13Q128 28 86 30Q46 28 52 13Z" fill="#fff3cf"/>
                        <path d="M27 91Q86 108 145 91Q146 146 86 147Q26 146 27 91Z" fill="#fbfbf8" stroke="#6b3b0a" stroke-width="4"/>
                        <path d="M31 111Q86 126 141 111" fill="none" stroke="#7a4a18" stroke-width="4"/>
                        <path d="M35 4L52 23L80 25L67 46L76 75L51 64L25 84L22 55L1 41L27 31Z" fill="url(#star)" stroke="#0b6fc0" stroke-width="2" stroke-linejoin="round"/>
                        <path d="M137 4L120 23L92 25L105 46L96 75L121 64L147 84L150 55L171 41L145 31Z" fill="url(#star)" stroke="#0b6fc0" stroke-width="2" stroke-linejoin="round"/>
                    </svg>
                    <div class="meta"><time>10:32</time><svg class="ticks" role="img" aria-label="Read"><use href="#ticks"/></svg></div>
                </article>

                <article class="bubble sent">
                    <p class="text">Crazy <svg class="emoji"><use href="#hand"/></svg><svg class="emoji"><use href="#hand"/></svg></p>
                    <div class="meta"><time>10:32</time><svg class="ticks" role="img" aria-label="Read"><use href="#ticks"/></svg></div>
                </article>

                <article class="bubble sent">
                    <p class="text">And I hope all sales are for 750$<svg class="emoji"><use href="#hand"/></svg></p>
                    <div class="meta"><time>10:32</time><svg class="ticks" role="img" aria-label="Read"><use href="#ticks"/></svg></div>
                </article>

                <article class="bubble received tail">
                    <p class="text">Both so far</p>
                    <div class="meta"><time>10:33</time></div>
                </article>

                <article class="bubble sent tail stacked">
                    <p class="text">Also Make sure to keep the follow up in place and<br>you will close more sales from the past Leads<svg class="emoji" viewBox="0 0 124 124">
                        <path d="M54 60C48 46 52 40 56 30L54 14C56 4 66 5 68 9C74 3 84 6 82 16L81 28C86 44 90 58 92 74C100 84 98 98 92 108C82 122 38 122 28 108C22 98 22 86 22 62C24 48 34 48 38 53C42 44 50 48 54 60Z" fill="url(#skin)"/>
                        <path d="M60 12Q66 36 73 60M54 60Q58 44 64 36M38 53L40 70Q46 76 54 66M23 68Q30 76 38 70M54 60Q60 66 82 66Q88 70 80 74Q60 78 54 70M80 76Q68 80 66 90" fill="none" stroke="#c98a6b" stroke-width="2" stroke-linecap="round"/>
                    </svg></p>
                    <div class="meta"><time>10:33</time><svg class="ticks" role="img" aria-label="Read"><use href="#ticks"/></svg></div>
                </article>

                <article class="bubble received tail">
                    <p class="text">Oh yes, daily</p>
                    <div class="meta"><time>10:34</time></div>
                </article>
            </section>
        </main>
    </div>
</body>
</html>
```
FILE: styles.css
```css
body {
    margin: 0;
    background-color: #ffffff;
    font-family: Roboto, "Liberation Sans", sans-serif;
}
h1, p {
    margin: 0;
    font-weight: 400;
}
.defs {
    position: absolute;
    width: 0;
    height: 0;
}
.page {
    padding: 80px 53px;
}
.logo {
    display: block;
    width: 500px;
    height: 430px;
    margin: 0 0 57px 87px;
}
.logo-text {
    font-family: Lato, sans-serif;
    font-size: 164px;
    font-weight: 900;
    letter-spacing: 40px;
    fill: #110625;
}
.phone {
    background-color: #0a1014;
    border-top: 72px solid #000000;
    border-bottom: 73px solid #000000;
}

/* header */
.topbar {
    display: flex;
    align-items: center;
    height: 249px;
    padding: 0 100px 10px 42px;
    border-bottom: 4px solid #151b1f;
    background-color: #0b1014;
}
.icon-btn {
    padding: 0;
    border: 0;
    background: none;
    line-height: 0;
}
.avatar {
    width: 198px;
    height: 198px;
    margin-left: 9px;
    border-radius: 50%;
    background-color: #000000;
}
.contact {
    flex: 1;
    margin-left: 32px;
    color: #f7f8fa;
}
.name-row {
    display: flex;
    gap: 6px;
    height: 102px;
}
.redacted {
    width: 990px;
    height: 87px;
    background-color: #000000;
}
.name-row h1 {
    font-size: 85px;
    line-height: 80px;
}
.contact p {
    padding-left: 3px;
    font-size: 62px;
    line-height: 66px;
}
.more {
    margin-left: 152px;
}

/* conversation */
.chat {
    position: relative;
    display: flex;
    flex-direction: column;
    gap: 14px;
    padding: 0 87px 42px;
    overflow: hidden;
}
.doodles {
    position: absolute;
    inset: 0;
    width: 100%;
    height: 100%;
    fill: none;
    stroke: #20272a;
    stroke-width: 5px;
    stroke-linejoin: round;
    stroke-linecap: round;
}
.doodles * {
    vector-effect: non-scaling-stroke;
}
.bubble {
    position: relative;
    display: flex;
    align-items: flex-end;
    border-radius: 60px;
}
.received {
    align-self: flex-start;
    gap: 70px;
    padding: 18px 40px 11px 50px;
    background-color: #1f272a;
    color: #f7f8fa;
}
.sent {
    align-self: flex-end;
    gap: 40px;
    padding: 37px 46px 16px 50px;
    background-color: #004e36;
    color: #f0fff8;
}
.tail {
    margin-top: 40px;
}
.tail:first-of-type {
    margin-top: 37px;
}
.tail::before {
    content: "";
    position: absolute;
    top: 0;
    width: 100px;
    height: 56px;
    background-color: inherit;
}
.received.tail {
    border-top-left-radius: 0;
}
.received.tail::before {
    left: -36px;
    clip-path: path("M10 0H100V56H37L3 15Q-4 2 10 0Z");
}
.sent.tail {
    border-top-right-radius: 0;
}
.sent.tail::before {
    right: -36px;
    clip-path: path("M90 0H0V56H63L97 15Q104 2 90 0Z");
}
.stacked {
    flex-direction: column;
    gap: 10px;
}
.sent.stacked {
    gap: 16px;
    width: calc(100% - 300px);
    padding-top: 18px;
}
.text {
    position: relative;
    align-self: flex-start;
    padding-bottom: 17px;
    font-size: 82px;
    line-height: 117px;
}
.sent .text {
    padding-bottom: 32px;
}
.emoji {
    width: 121px;
    height: 121px;
    margin: -10px 0;
    vertical-align: -24px;
}
.star-face {
    width: 170px;
    height: 170px;
    margin: 17px 7px 40px 4px;
}
.meta {
    position: relative;
    display: flex;
    align-items: center;
    gap: 20px;
    font-size: 60px;
    line-height: 70px;
    color: #8a9194;
}
.sent .meta {
    color: #7a9d92;
}
.ticks {
    width: 82px;
    height: 56px;
}
```
